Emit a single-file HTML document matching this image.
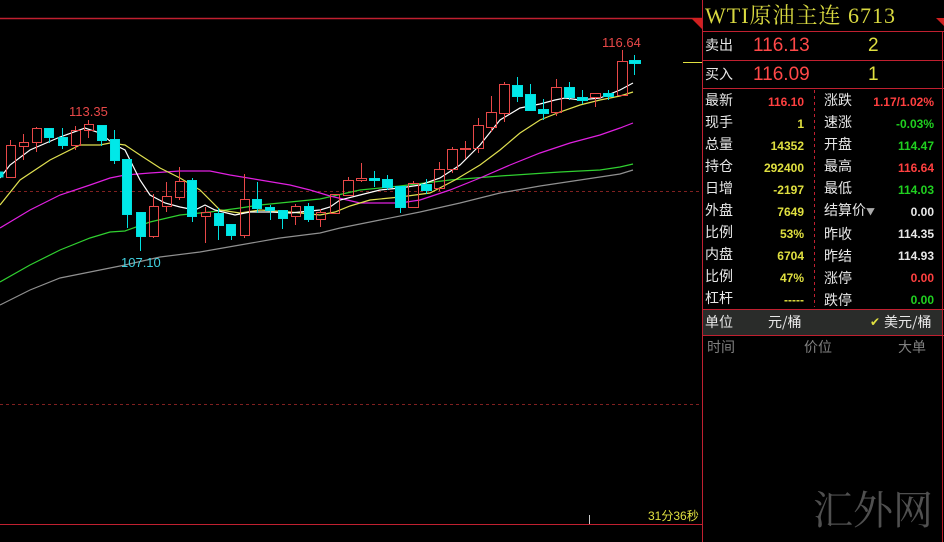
<!DOCTYPE html>
<html><head><meta charset="utf-8"><style>
html,body{margin:0;padding:0;background:#000;width:944px;height:542px;overflow:hidden}
body{position:relative;font-family:"Liberation Sans","Noto Sans CJK SC",sans-serif}
.t{position:absolute;white-space:nowrap;line-height:1}
.l{color:#e8e8e8;font-size:14px;font-family:"Noto Sans CJK SC","WenQuanYi Zen Hei",sans-serif}
.v{font-size:12px;font-weight:bold;text-align:right}
.y{color:#e0e040}.r{color:#ff4040}.g{color:#20d020}.w{color:#e8e8e8}
</style></head><body>
<svg width="944" height="542" style="position:absolute;left:0;top:0">
<line x1="0" y1="18.5" x2="702" y2="18.5" stroke="#c02030" stroke-width="1.5"/>
<polygon points="691,18 702,18 702,29" fill="#d02020"/>
<polygon points="936,18 944,18 944,26" fill="#d02020"/>
<line x1="702.5" y1="0" x2="702.5" y2="542" stroke="#c02030"/>
<line x1="942.5" y1="31" x2="942.5" y2="542" stroke="#c02030"/>
<line x1="702" y1="31.5" x2="944" y2="31.5" stroke="#c02030"/>
<line x1="702" y1="60.5" x2="944" y2="60.5" stroke="#c02030"/>
<line x1="702" y1="88.5" x2="944" y2="88.5" stroke="#c02030"/>
<rect x="703" y="310" width="239" height="25" fill="#2a2c2a"/>
<line x1="702" y1="309.5" x2="944" y2="309.5" stroke="#c02030"/>
<line x1="702" y1="335.5" x2="944" y2="335.5" stroke="#c02030"/>
<line x1="814.5" y1="90" x2="814.5" y2="307" stroke="#c02030" stroke-dasharray="3,3"/>
<line x1="0" y1="191.5" x2="702" y2="191.5" stroke="#802020" stroke-dasharray="3,3"/>
<line x1="0" y1="404.5" x2="702" y2="404.5" stroke="#802020" stroke-dasharray="3,3"/>
<line x1="0" y1="524.5" x2="702" y2="524.5" stroke="#c02030"/>
<line x1="589.5" y1="515" x2="589.5" y2="524" stroke="#ccc"/>
<line x1="683" y1="62.5" x2="702" y2="62.5" stroke="#e0e040"/>
<g fill="none" stroke-width="1.2">
<polyline stroke="#909090" points="0,305 30,290 60,278 100,270 125,265 160,257 200,252 240,245 280,238 320,233 340,228 380,220 420,212 460,203 500,193 540,186 580,180 620,174 633,170"/>
<polyline stroke="#30d030" points="0,282 30,265 60,250 90,238 110,232 125,231 150,222 180,215 210,212 240,208 260,205 290,202 320,199 360,190 400,186 450,180 500,176 560,172 600,170 620,167 633,164"/>
<polyline stroke="#e020e0" points="0,228 30,210 60,195 90,185 110,178 125,175 150,173 180,171 210,171 230,175 260,180 290,185 310,190 330,196 360,203 380,203 400,203 420,200 450,190 480,178 510,165 540,153 570,143 600,135 620,128 633,123"/>
<polyline stroke="#e0e050" points="0,205 20,180 50,160 80,145 100,145 110,143 125,145 140,155 160,168 180,178 200,190 220,210 240,213 260,210 290,212 320,215 335,212 350,206 370,200 400,197 430,193 455,180 480,165 500,150 520,133 540,120 560,112 580,105 600,100 620,96 633,92"/>
<polyline stroke="#ffffff" points="0,178 10,165 30,150 60,137 85,128 100,133 115,145 125,150 140,180 150,195 165,203 180,207 195,210 205,205 215,210 235,215 250,212 270,212 290,213 320,210 330,207 340,200 360,195 380,190 400,188 420,185 440,178 460,165 480,145 500,120 520,108 540,104 555,100 565,98 580,100 600,98 620,90 633,83"/>
</g>
<g stroke="#e84848" fill="none">
<path d="M10.5 140V145M10.5 177V178M23.5 134V142M23.5 146V160M36.5 127V128M36.5 142V152M75.5 126V130M75.5 145V150M88.5 120V124M88.5 130V138M153.5 194V206M153.5 236V238M166.5 182V196M166.5 206V212M179.5 167V181M179.5 197V200M205.5 207V212M205.5 216V243M244.5 174V199M244.5 235V238M295.5 204V206M295.5 216V225M320.5 209V212M320.5 219V227M348.5 177V180M361.5 163V178M361.5 180V182M413.5 181V183M439.5 162V169M439.5 188V191M452.5 147V149M452.5 169V173M465.5 141V159M478.5 118V125M478.5 148V153M491.5 96V112M491.5 127V132M504.5 82V84M504.5 113V122M556.5 79V87M556.5 112V116M595.5 97V107M622.5 50V61"/>
<rect x="6.5" y="145.5" width="9" height="32"/><rect x="19.5" y="142.5" width="9" height="4"/><rect x="32.5" y="128.5" width="9" height="14"/>
<rect x="71.5" y="130.5" width="9" height="15"/><rect x="84.5" y="124.5" width="9" height="6"/>
<rect x="149.5" y="206.5" width="9" height="30"/><rect x="162.5" y="196.5" width="9" height="10"/><rect x="175.5" y="181.5" width="9" height="16"/>
<rect x="201.5" y="212.5" width="9" height="4"/><rect x="240.5" y="199.5" width="9" height="36"/>
<rect x="291.5" y="206.5" width="9" height="10"/><rect x="316.5" y="212.5" width="9" height="7"/>
<rect x="330.5" y="194.5" width="9" height="19"/><rect x="343.5" y="180.5" width="10" height="15"/><rect x="356.5" y="178.5" width="10" height="2"/>
<rect x="408.5" y="183.5" width="10" height="24"/><rect x="434.5" y="169.5" width="10" height="19"/><rect x="447.5" y="149.5" width="10" height="20"/>
<rect x="460.5" y="148.5" width="10" height="1"/><rect x="473.5" y="125.5" width="10" height="23"/><rect x="486.5" y="112.5" width="10" height="15"/>
<rect x="499.5" y="84.5" width="10" height="29"/><rect x="551.5" y="87.5" width="10" height="25"/><rect x="590.5" y="93.5" width="10" height="4"/><rect x="617.5" y="61.5" width="10" height="34"/>
</g>
<g stroke="#00e0e0" fill="#00e8e8">
<path d="M49.5 137V143M62.5 128V149M101.5 140V146M114.5 130V164M127.5 214V228M140.5 236V251M192.5 178V222M218.5 208V240M231.5 235V240M257.5 182V213M270.5 205V220M282.5 218V229M308.5 203V222M374.5 171V187M387.5 175V190M400.5 207V213M426.5 179V194M517.5 77V102M530.5 84V111M543.5 99V120M569.5 82V100M582.5 90V104M608.5 90V100M634.5 55V75"/>
<rect x="0" y="172" width="3" height="5"/><rect x="44.5" y="128.5" width="9" height="9"/><rect x="58.5" y="137.5" width="9" height="8"/>
<rect x="97.5" y="125.5" width="9" height="15"/><rect x="110.5" y="139.5" width="9" height="21"/><rect x="122.5" y="159.5" width="9" height="55"/>
<rect x="136.5" y="212.5" width="9" height="24"/><rect x="187.5" y="180.5" width="9" height="36"/><rect x="214.5" y="213.5" width="9" height="12"/>
<rect x="226.5" y="224.5" width="9" height="11"/><rect x="252.5" y="199.5" width="9" height="9"/><rect x="265.5" y="207.5" width="9" height="3"/>
<rect x="278.5" y="210.5" width="9" height="8"/><rect x="304.5" y="206.5" width="9" height="13"/>
<rect x="369.5" y="178.5" width="10" height="2"/><rect x="382.5" y="179.5" width="10" height="8"/><rect x="395.5" y="186.5" width="10" height="21"/>
<rect x="421.5" y="184.5" width="10" height="6"/><rect x="512.5" y="85.5" width="10" height="11"/><rect x="525.5" y="94.5" width="10" height="16"/>
<rect x="538.5" y="109.5" width="10" height="4"/><rect x="564.5" y="87.5" width="10" height="10"/><rect x="577.5" y="97.5" width="10" height="3"/>
<rect x="603.5" y="93.5" width="10" height="3"/><rect x="629.5" y="60.5" width="11" height="3"/>
</g>
</svg>
<div class="t" style="left:69px;top:105px;color:#e84848;font-size:13px">113.35</div>
<div class="t" style="left:121px;top:256px;color:#40d0e0;font-size:13px">107.10</div>
<div class="t" style="left:602px;top:36px;color:#e84848;font-size:13px">116.64</div>
<div class="t" style="left:648px;top:510px;color:#e0e040;font-size:12px">31分36秒</div>
<div class="t" style="left:813px;top:488px;color:#505050;font-size:40px;font-family:'Noto Serif CJK SC',serif">汇外网</div>

<div class="t" style="left:705px;top:5px;color:#d8d840;font-size:22px;letter-spacing:1px;font-family:'Liberation Serif','Noto Serif CJK SC',serif">WTI原油主连 6713</div>
<div class="t l" style="left:705px;top:38px">卖出</div>
<div class="t r" style="left:753px;top:36px;font-size:19px;color:#ff4848">116.13</div>
<div class="t y" style="left:868px;top:36px;font-size:19px">2</div>
<div class="t l" style="left:705px;top:67px">买入</div>
<div class="t r" style="left:753px;top:65px;font-size:19px;color:#ff4848">116.09</div>
<div class="t y" style="left:868px;top:65px;font-size:19px">1</div>

<div class="t l" style="left:705px;top:89px;line-height:22px">最新<br>现手<br>总量<br>持仓<br>日增<br>外盘<br>比例<br>内盘<br>比例<br>杠杆</div>
<div class="t v" style="left:744px;width:60px;top:91px;line-height:22px"><span class="r">116.10</span><br><span class="y">1</span><br><span class="y">14352</span><br><span class="y">292400</span><br><span class="y">-2197</span><br><span class="y">7649</span><br><span class="y">53%</span><br><span class="y">6704</span><br><span class="y">47%</span><br><span class="y">-----</span></div>
<div class="t l" style="left:824px;top:89px;line-height:22px">涨跌<br>速涨<br>开盘<br>最高<br>最低<br>结算价<span style="font-size:9px;color:#aaa">▼</span><br>昨收<br>昨结<br>涨停<br>跌停</div>
<div class="t v" style="left:864px;width:70px;top:91px;line-height:22px"><span class="r">1.17/1.02%</span><br><span class="g">-0.03%</span><br><span class="g">114.47</span><br><span class="r">116.64</span><br><span class="g">114.03</span><br><span class="w">0.00</span><br><span class="w">114.35</span><br><span class="w">114.93</span><br><span class="r">0.00</span><br><span class="g">0.00</span></div>

<div class="t l" style="left:705px;top:315px">单位</div>
<div class="t l" style="left:768px;top:315px">元/桶</div>
<div class="t" style="left:870px;top:316px;color:#e0e040;font-size:12px">✔</div>
<div class="t l" style="left:884px;top:315px">美元/桶</div>
<div class="t l" style="left:707px;top:340px;color:#808080">时间</div>
<div class="t l" style="left:804px;top:340px;color:#808080">价位</div>
<div class="t l" style="left:898px;top:340px;color:#808080">大单</div>
</body></html>
